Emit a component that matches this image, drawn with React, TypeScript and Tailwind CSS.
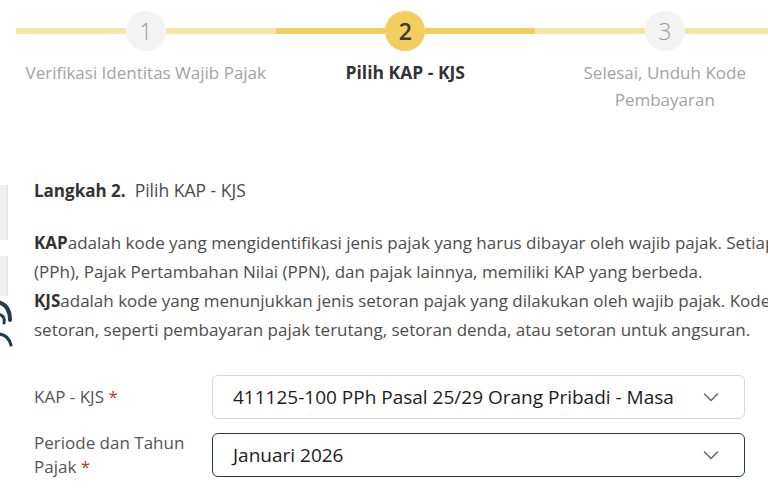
import React from "react";

const LIGHT = "bg-[#f8e4a6]";
const DARK = "bg-[#f2cd5f]";

function Chevron() {
  return (
    <svg width="18" height="18" viewBox="0 0 18 18" fill="none" className="shrink-0">
      <path d="M2.5 6 L9 12.5 L15.5 6" stroke="#6b6b6b" strokeWidth="1.6" strokeLinecap="round" strokeLinejoin="round" />
    </svg>
  );
}

function Step({ n, active, label }: { n: number; active?: boolean; label: React.ReactNode }) {
  return (
    <div className="w-[259.5px] shrink-0 flex flex-col items-center">
      <div className="w-full flex items-center mt-[11px]">
        <div className={`flex-1 h-[6px] ${active ? DARK : LIGHT}`} />
        <div
          className={`w-10 h-10 rounded-full flex items-center justify-center text-[23px] ${
            active ? "bg-[#f2cd5f] text-[#3a3a3a] font-semibold" : "bg-[#f3f3f3] text-[#9c9c9c] font-light"
          }`}
        >
          {n}
        </div>
        <div className={`flex-1 h-[6px] ${active ? DARK : LIGHT}`} />
      </div>
      <div
        className={`mt-[8px] text-center leading-[27px] whitespace-nowrap ${
          active ? "text-[#333333] font-bold text-[17.5px]" : "text-[#a3a3a3] text-[17px]"
        }`}
      >
        {label}
      </div>
    </div>
  );
}

export default function App() {
  return (
    <div
      className="relative w-[768px] h-[503px] overflow-hidden bg-white"
      style={{ fontFamily: '"Open Sans", "Noto Sans", sans-serif' }}
    >
      {/* left edge fragments of a floating widget */}
      <div className="absolute left-0 top-[185px] w-[8px] h-[55px] bg-[#efefef] border-r border-[#e2e2e2]" />
      <div className="absolute left-0 top-[256px] w-[8px] h-[40px] bg-[#efefef] border-r border-[#e2e2e2]" />
      <svg className="absolute left-0 top-[298px]" width="14" height="50" viewBox="0 0 14 50" fill="none">
        <path d="M-2 4 C6 6 10 12 10 22" stroke="#1e3c4a" strokeWidth="4" strokeLinecap="round" />
        <path d="M-2 16 C3 17 5 20 4 25" stroke="#1e3c4a" strokeWidth="3" strokeLinecap="round" />
        <path d="M-2 36 C4 36 9 40 11 47" stroke="#1e3c4a" strokeWidth="3" strokeLinecap="round" />
      </svg>

      {/* stepper */}
      <div className="flex pl-[16px] h-[120px]">
        <Step n={1} label="Verifikasi Identitas Wajib Pajak" />
        <Step n={2} active label="Pilih KAP - KJS" />
        <Step
          n={3}
          label={
            <>
              Selesai, Unduh Kode
              <br />
              Pembayaran
            </>
          }
        />
      </div>

      {/* content */}
      <div className="pl-[34px] pt-[58px]">
        <div className="text-[17px] leading-[24px] text-[#333333] whitespace-nowrap">
          <span className="font-bold">Langkah 2.</span>
          <span className="ml-[9px] text-[#4a4a4a] text-[17.5px]">Pilih KAP - KJS</span>
        </div>

        <div className="mt-[25px] text-[17px] leading-[29px] text-[#4d4d4d] whitespace-nowrap">
          <div>
            <span className="font-bold text-[#333333]">KAP</span>adalah kode yang mengidentifikasi jenis pajak yang harus dibayar oleh wajib pajak. Setiap jenis pajak, seperti Pajak Penghasilan
          </div>
          <div>(PPh), Pajak Pertambahan Nilai (PPN), dan pajak lainnya, memiliki KAP yang berbeda.</div>
          <div>
            <span className="font-bold text-[#333333]">KJS</span>adalah kode yang menunjukkan jenis setoran pajak yang dilakukan oleh wajib pajak. Kode ini membedakan jenis
          </div>
          <div>setoran, seperti pembayaran pajak terutang, setoran denda, atau setoran untuk angsuran.</div>
        </div>

        <div className="mt-[31px] flex flex-col gap-[12px]">
          <div className="flex items-center">
            <div className="w-[178px] text-[17px] leading-[24px] text-[#555555]">
              KAP - KJS <span className="text-[#c0392b]">*</span>
            </div>
            <div className="w-[533px] h-[44px] rounded-[6px] border border-[#d6d6d6] flex items-center pl-[20px] pr-[24px]">
              <span className="flex-1 text-[19px] text-[#1c1c1c] whitespace-nowrap overflow-hidden">
                411125-100 PPh Pasal 25/29 Orang Pribadi - Masa
              </span>
              <Chevron />
            </div>
          </div>
          <div className="flex items-center">
            <div className="w-[178px] text-[17px] leading-[24px] text-[#555555]">
              Periode dan Tahun
              <br />
              Pajak <span className="text-[#c0392b]">*</span>
            </div>
            <div className="w-[533px] h-[44px] rounded-[6px] border border-[#2b3445] flex items-center pl-[20px] pr-[24px]">
              <span className="flex-1 text-[19px] text-[#1c1c1c] whitespace-nowrap">Januari 2026</span>
              <Chevron />
            </div>
          </div>
        </div>
      </div>
    </div>
  );
}
